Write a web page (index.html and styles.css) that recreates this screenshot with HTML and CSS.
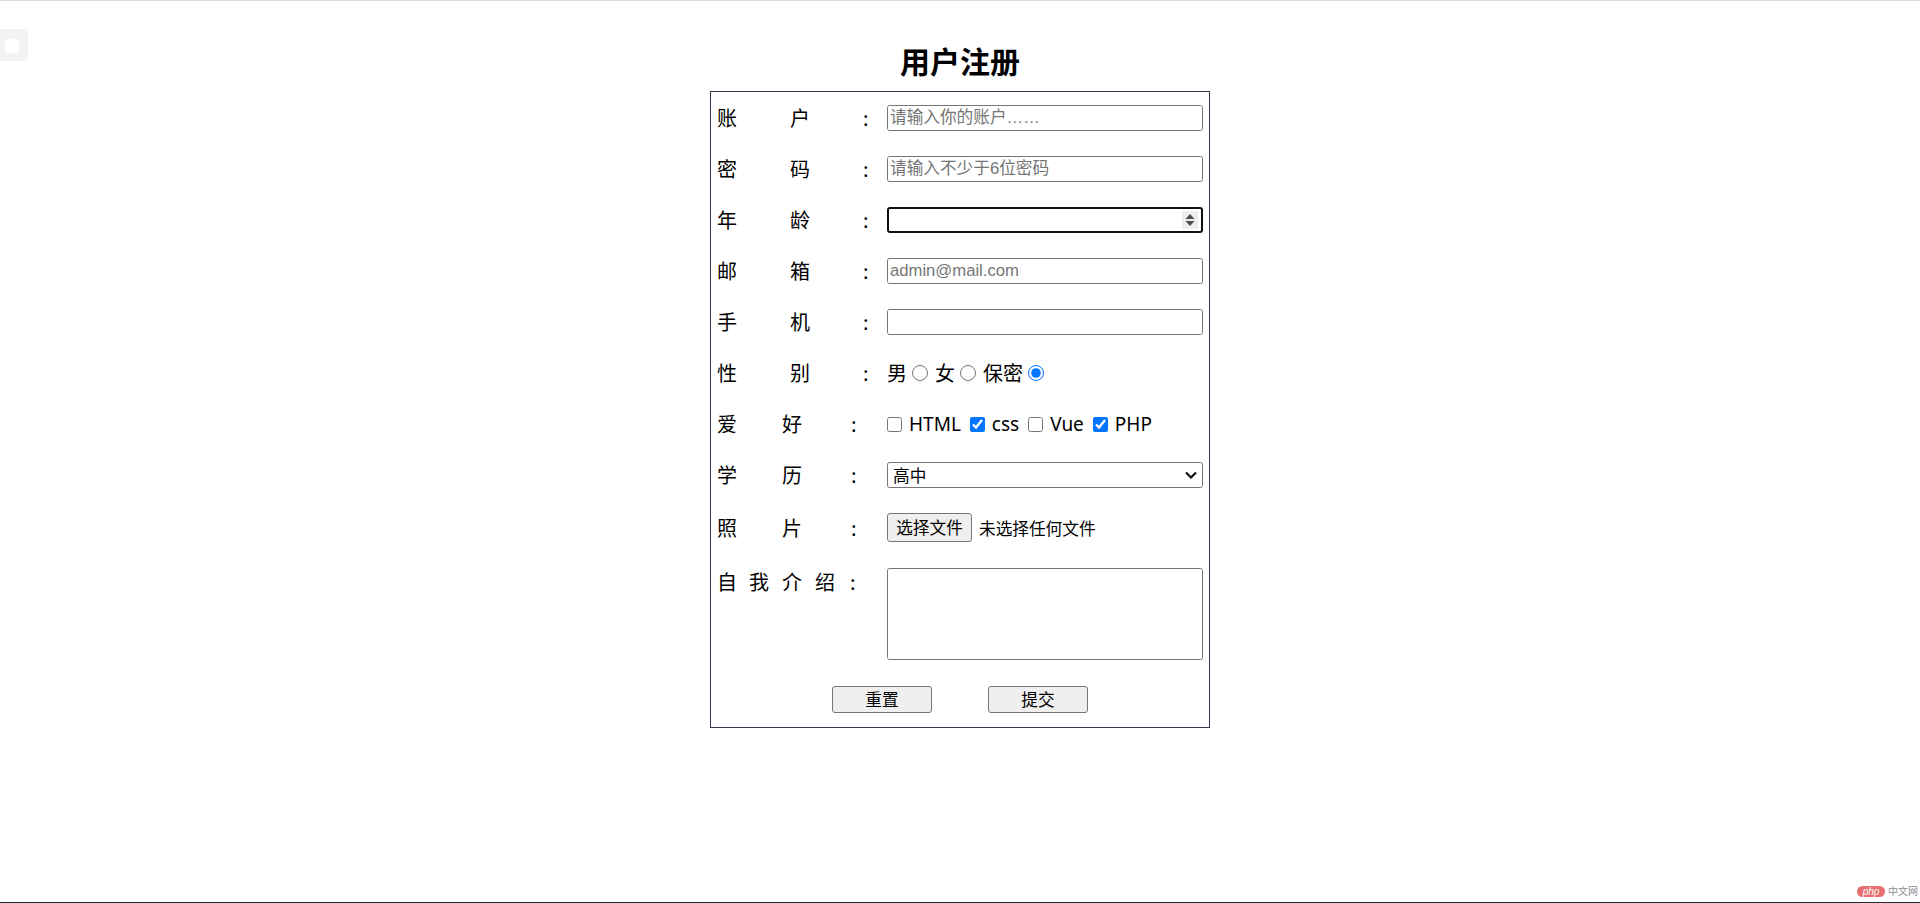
FILE: index.html
```html
<!DOCTYPE html>
<html lang="zh-CN">
<head>
<meta charset="utf-8">
<title>用户注册</title>
<link rel="stylesheet" href="styles.css">
</head>
<body>
<div class="topbar"></div>
<div class="side-widget"><span class="side-inner"></span></div>

<h1 class="title">用户注册</h1>

<form class="reg" action="#" onsubmit="return false">
  <div class="row">
    <label class="lab lab-a"><span>账</span><span>户</span><span>:</span></label>
    <input class="field" type="text" placeholder="请输入你的账户……">
  </div>
  <div class="row">
    <label class="lab lab-a"><span>密</span><span>码</span><span>:</span></label>
    <input class="field" type="password" placeholder="请输入不少于6位密码">
  </div>
  <div class="row">
    <label class="lab lab-a"><span>年</span><span>龄</span><span>:</span></label>
    <span class="spin-wrap">
      <input class="field field-focus" type="number">
      <span class="spin">
        <svg width="16" height="18" viewBox="0 0 16 18"><path d="M3.5 8 L8 3 L12.5 8 Z" fill="#4d4d4d"/><path d="M3.5 10 L8 15 L12.5 10 Z" fill="#4d4d4d"/></svg>
      </span>
    </span>
  </div>
  <div class="row">
    <label class="lab lab-a"><span>邮</span><span>箱</span><span>:</span></label>
    <input class="field" type="email" placeholder="admin@mail.com">
  </div>
  <div class="row">
    <label class="lab lab-a"><span>手</span><span>机</span><span>:</span></label>
    <input class="field" type="tel">
  </div>
  <div class="row">
    <label class="lab lab-a"><span>性</span><span>别</span><span>:</span></label>
    <div class="opts">
      <span>男</span><input class="radio" type="radio" name="sex">
      <span>女</span><input class="radio" type="radio" name="sex">
      <span>保密</span><input class="radio" type="radio" name="sex" checked>
    </div>
  </div>
  <div class="row">
    <label class="lab lab-b"><span>爱</span><span>好</span><span>:</span></label>
    <div class="opts">
      <input class="check" type="checkbox"><span class="latin">HTML</span>
      <input class="check" type="checkbox" checked><span class="latin">css</span>
      <input class="check" type="checkbox"><span class="latin">Vue</span>
      <input class="check" type="checkbox" checked><span class="latin">PHP</span>
    </div>
  </div>
  <div class="row">
    <label class="lab lab-b"><span>学</span><span>历</span><span>:</span></label>
    <span class="select-wrap">
      <select class="field select">
        <option>初中</option>
        <option selected>高中</option>
        <option>大专</option>
        <option>本科</option>
      </select>
      <svg class="chev" width="14" height="10" viewBox="0 0 14 10"><path d="M2 2.5 L7 7.5 L12 2.5" fill="none" stroke="#111111" stroke-width="2.2"/></svg>
    </span>
  </div>
  <div class="row row-file">
    <label class="lab lab-b"><span>照</span><span>片</span><span>:</span></label>
    <button type="button" class="btn btn-file">选择文件</button>
    <span class="filetext">未选择任何文件</span>
  </div>
  <div class="row row-intro">
    <label class="lab lab-c"><span>自</span><span>我</span><span>介</span><span>绍</span><span>:</span></label>
    <textarea class="area"></textarea>
  </div>
  <div class="row row-btns">
    <button type="reset" class="btn btn-wide">重置</button>
    <button type="submit" class="btn btn-wide">提交</button>
  </div>
</form>

<div class="watermark"><span class="wm-pill">php</span><span class="wm-text">中文网</span></div>
<div class="bottombar"></div>
</body>
</html>
```

FILE: styles.css
```css
* {
  box-sizing: border-box;
}

html,
body {
  margin: 0;
  padding: 0;
  background: #ffffff;
}

body {
  font-family: "Noto Sans CJK SC", "Liberation Sans", sans-serif;
  color: #000000;
  min-height: 903px;
}

.topbar {
  height: 1px;
  background: #dadada;
}

.side-widget {
  position: absolute;
  left: 0;
  top: 29px;
  width: 28px;
  height: 32px;
  background: #f3f3f3;
  border-radius: 0 5px 5px 0;
}

.side-inner {
  position: absolute;
  left: 5px;
  top: 10px;
  width: 14px;
  height: 14px;
  background: #ffffff;
  border-radius: 2px;
  box-shadow: 0 0 2px #ffffff;
}

.title {
  margin: 44px 0 16px;
  font-size: 30px;
  line-height: 30px;
  font-weight: 700;
  text-align: center;
}

.reg {
  width: 500px;
  margin: 0 auto;
  border: 1px solid #2f3b4c;
  padding: 13px 6px 14px 6px;
  display: flex;
  flex-direction: column;
  gap: 25px;
}

.row {
  display: flex;
  align-items: center;
  height: 26px;
}

.row-file {
  height: 29px;
}

.row-intro {
  align-items: flex-start;
  height: 92px;
  margin-top: 1px;
}

.row-btns {
  justify-content: center;
  gap: 56px;
  height: 27px;
  margin-top: 1px;
}

.lab {
  width: 170px;
  flex: none;
  display: grid;
  font-size: 20px;
  line-height: 26px;
}

.lab-a {
  grid-template-columns: 73px 73px auto;
}

.lab-b {
  grid-template-columns: 65px 69px auto;
}

.lab-c {
  grid-template-columns: 32px 33px 33px 35px auto;
  line-height: 28px;
}

.field {
  display: block;
  width: 316px;
  height: 26px;
  margin: 0;
  border: 1px solid #767676;
  border-radius: 2.5px;
  padding: 0 2px;
  font-family: "Liberation Sans", "Noto Sans CJK SC", sans-serif;
  font-size: 16.67px;
  color: #000000;
  background: #ffffff;
  outline: none;
}

.field::placeholder {
  color: #757575;
}

.field-focus {
  border: 2px solid #101010;
  border-radius: 3px;
}

.field-focus::-webkit-inner-spin-button,
.field-focus::-webkit-outer-spin-button {
  -webkit-appearance: none;
  margin: 0;
}

.spin-wrap,
.select-wrap {
  position: relative;
  display: block;
  width: 316px;
  height: 26px;
}

.spin {
  position: absolute;
  right: 5px;
  top: 4px;
  width: 16px;
  height: 18px;
  background: #ededed;
  display: block;
}

.spin svg {
  display: block;
}

.select {
  -webkit-appearance: none;
  appearance: none;
  padding: 0 20px 0 5px;
  font-family: "Noto Sans CJK SC", "Liberation Sans", sans-serif;
}

.chev {
  position: absolute;
  right: 5px;
  top: 8px;
  pointer-events: none;
}

.opts {
  display: flex;
  align-items: center;
  font-size: 20px;
  line-height: 26px;
}

.radio {
  width: 16px;
  height: 16px;
  margin: 0 7px 0 5px;
}

.check {
  width: 15px;
  height: 15px;
  margin: 0 7px 0 0;
}

.latin {
  font-family: "Noto Sans", "Liberation Sans", sans-serif;
  font-size: 19px;
  margin-right: 9px;
}

.btn {
  height: 29px;
  padding: 0;
  border: 1px solid #767676;
  border-radius: 3px;
  background: #efefef;
  color: #000000;
  font-family: "Noto Sans CJK SC", "Liberation Sans", sans-serif;
  font-size: 16.67px;
  line-height: 1;
}

.btn-file {
  width: 85px;
}

.btn-wide {
  width: 100px;
  height: 27px;
}

.filetext {
  margin-left: 7px;
  font-size: 16.67px;
}

.area {
  display: block;
  width: 316px;
  height: 92px;
  margin: 0;
  border: 1px solid #767676;
  border-radius: 2.5px;
  resize: none;
  font-family: "Liberation Sans", "Noto Sans CJK SC", sans-serif;
  font-size: 16.67px;
  outline: none;
}

.watermark {
  position: absolute;
  right: 2px;
  top: 885px;
  display: flex;
  align-items: center;
  gap: 3px;
}

.wm-pill {
  display: block;
  width: 28px;
  height: 11px;
  border-radius: 6px;
  background: #e86f6f;
  color: #ffffff;
  font-family: "Liberation Sans", sans-serif;
  font-style: italic;
  font-size: 10px;
  line-height: 11px;
  text-align: center;
}

.wm-text {
  color: #8c8c8c;
  font-size: 10px;
  line-height: 12px;
}

.bottombar {
  position: absolute;
  left: 0;
  right: 0;
  top: 902px;
  height: 1px;
  background: #1d2b35;
}
```
